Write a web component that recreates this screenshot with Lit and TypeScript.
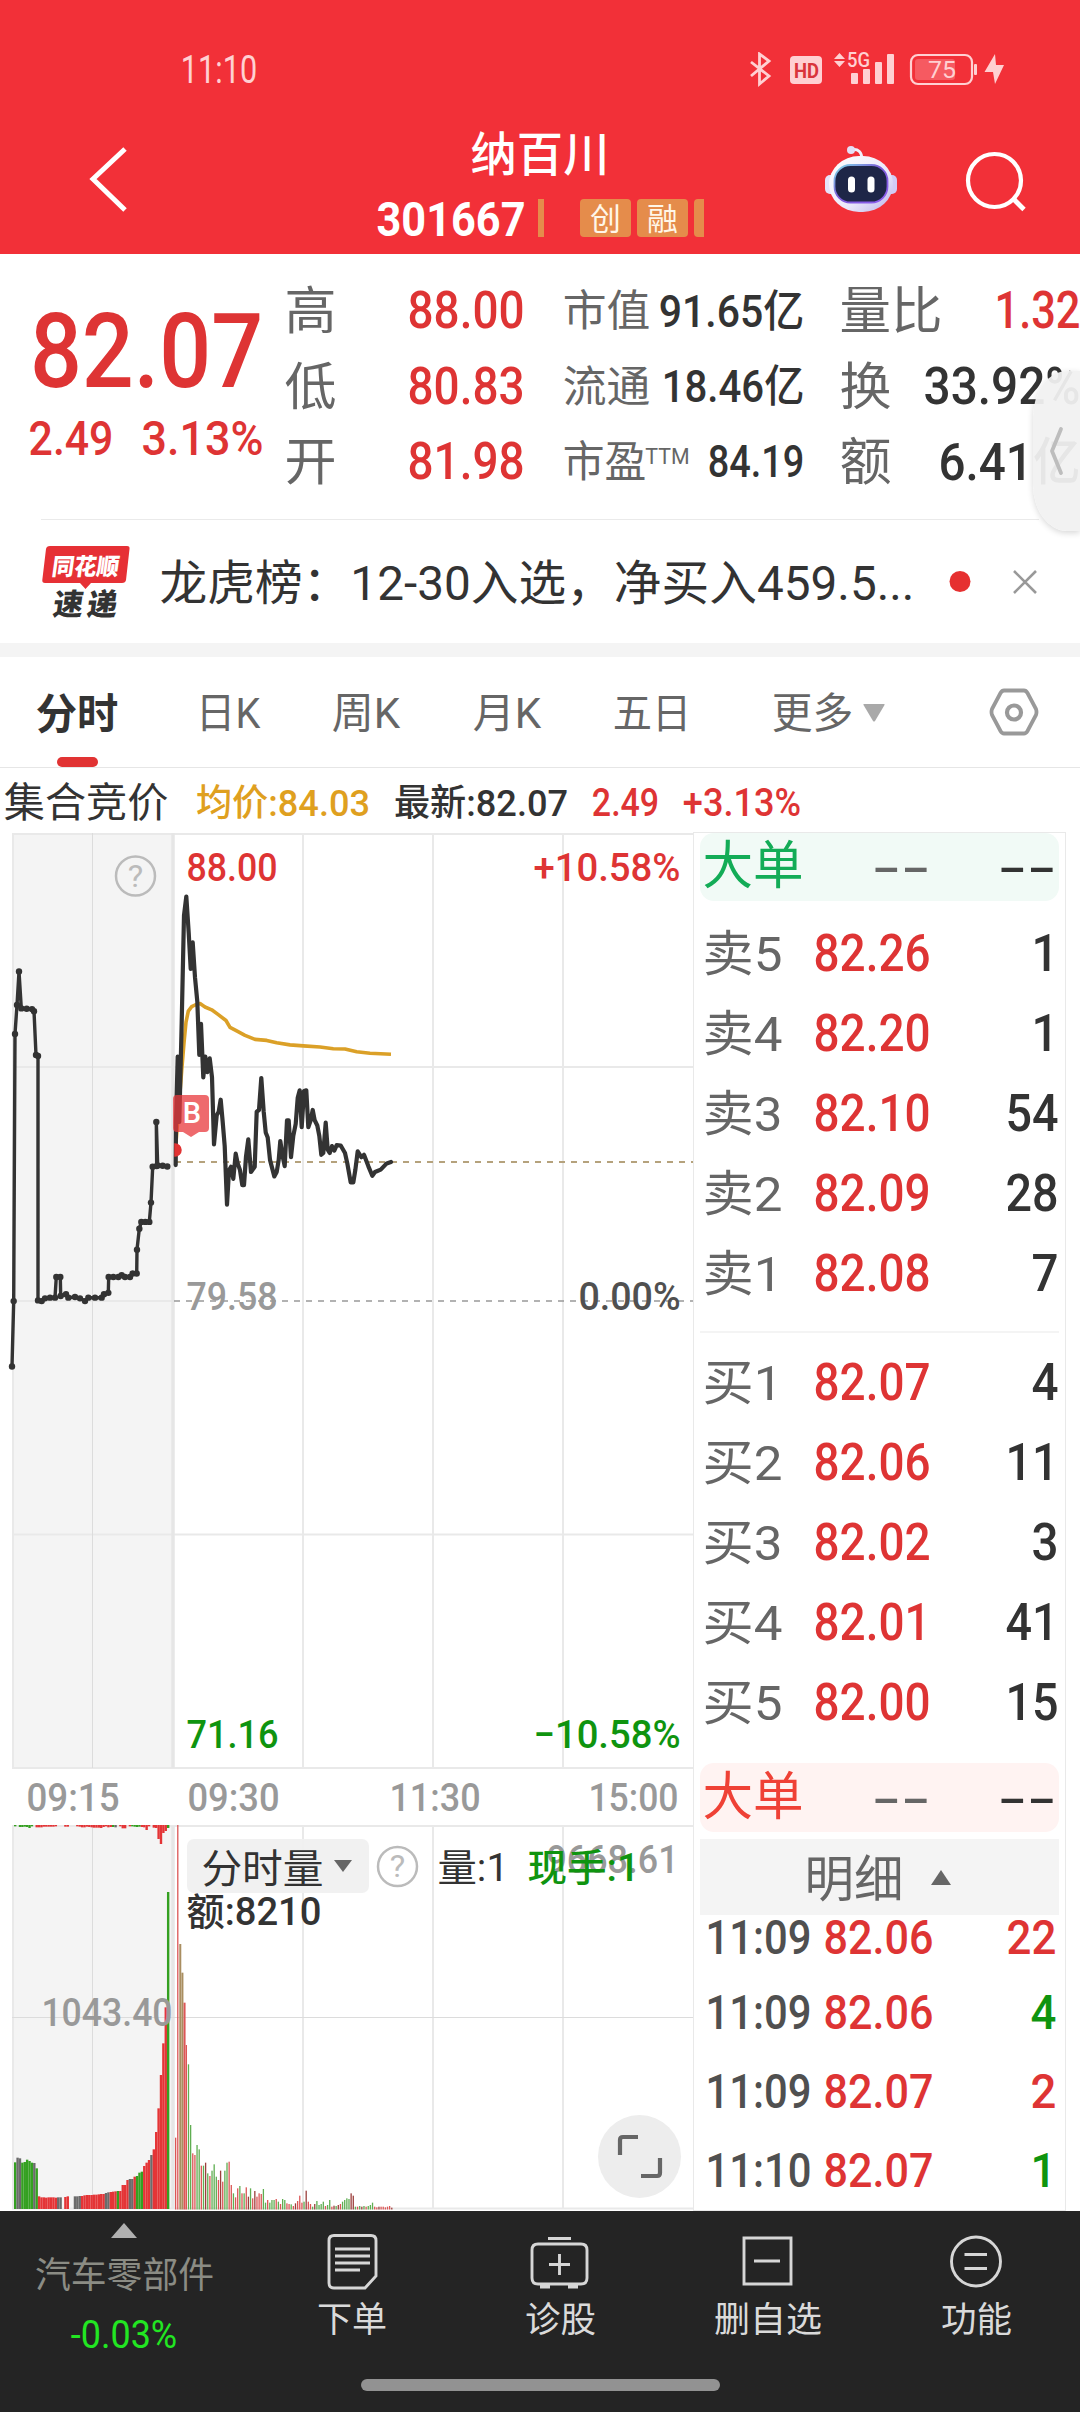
import { LitElement, html, svg, css } from "lit";
import { customElement } from "lit/decorators.js";

const CJK = /[\u4e00-\u9fff]/;

/** Text drawn centred in a box of its own size, fitted to a given ink width. */
const fit = (text: string, size: number, width: number, cls = "") => {
  const base = size / 2 + size * (CJK.test(text) ? 0.365 : 0.35);
  return html`<svg class="fit" width=${width} height=${size}>
    <text class=${cls} x=${-size * 0.03} y=${base} font-size=${size}
      textLength=${width + size * 0.06} lengthAdjust="spacingAndGlyphs">${text}</text>
  </svg>`;
};

/** Same for text placed on a chart: x is the ink's left edge, y its middle. */
const plot = (text: string, size: number, x: number, y: number, width: number, cls = "") => svg`
  <text class=${cls} x=${x - size * 0.04} y=${y + size * (CJK.test(text) ? 0.365 : 0.35)} font-size=${size}
    textLength=${width + size * 0.08} lengthAdjust="spacingAndGlyphs">${text}</text>`;

const shared = css`
  :host { display: block; }
  svg { display: block; flex: none; }
  .fit { overflow: visible; }
  text { font-family: Roboto, "Noto Sans CJK SC", sans-serif; fill: #333; }
  .m { font-weight: 500; }
  .b { font-weight: 700; }
  .red { fill: #de3434; }
  .green { fill: #0f940f; }
  .grey { fill: #666; }
  .pale { fill: #999; }
  .mid { fill: #505050; }
  .white { fill: #fff; }
  .dash { font-family: "DejaVu Sans", sans-serif; }
`;

@customElement("app-header")
class AppHeader extends LitElement {
  static styles = [shared, css`
    :host { background: #f23038; height: 254px; }
    .status { display: flex; justify-content: space-between; align-items: center; height: 118px; padding: 22px 74px 0 182px; box-sizing: border-box; }
    .soft { fill: #ffd0d2; }
    .nav { display: grid; grid-template-columns: 255px 1fr 255px; height: 136px; }
    .back { padding: 28px 0 0 88px; }
    .title { display: flex; flex-direction: column; align-items: center; padding-top: 12px; gap: 22px; }
    .code { display: flex; align-items: center; height: 38px; width: 328px; padding-left: 3px; }
    .bar { width: 6px; height: 38px; margin: 0 36px 0 14px; background: #e58c4b; }
    .chip { display: flex; justify-content: center; align-items: center; width: 51px; height: 38px; margin-right: 6px; border-radius: 4px; background: #e58c4b; }
    .chip.cut { width: 10px; margin: 0; border-radius: 4px 0 0 4px; }
    .cream { fill: #fff6e8; }
    .tools { display: flex; gap: 66px; padding-top: 26px; margin-left: -2px; }
  `];
  render() {
    return html`
      <div class="status">
        ${fit("11:10", 38, 74, "soft")}
        <svg width="258" height="36" viewBox="748 52 258 36">
          <g fill="none" stroke="#ffd0d2" stroke-width="2.8">
            <path d="M751 62 L769 76 L759.500 84 V54 L769 61 L751 76" />
            <rect x="911" y="55" width="61" height="29" rx="7" stroke-width="2.200" />
          </g>
          <g fill="#ffd0d2">
            <rect x="790" y="56" width="32" height="28" rx="4" />
            <path d="M839.500 53 L845 59 H834 Z M839.500 67 L845 61 H834 Z" />
            <rect x="851" y="73" width="7" height="11" rx="1" />
            <rect x="863" y="69" width="7" height="15" rx="1" />
            <rect x="875" y="62" width="7" height="22" rx="1" />
            <rect x="887" y="54" width="7" height="30" rx="1" />
            <rect x="974" y="64" width="3" height="11" rx="1" />
            <path d="M995 54 L984.500 72 H993 L995 84 L1004 65 H996 Z" />
          </g>
          <rect x="915" y="59" width="40" height="21" rx="3" fill="#f65a61" />
          <text class="b" x="794" y="77.500" font-size="21" textLength="25" lengthAdjust="spacingAndGlyphs" style="fill:#d9343b">HD</text>
          <text class="soft m" x="847" y="67" font-size="21" textLength="23" lengthAdjust="spacingAndGlyphs">5G</text>
          <text class="soft" x="928" y="78" font-size="24" textLength="28" lengthAdjust="spacingAndGlyphs">75</text>
        </svg>
      </div>
      <div class="nav">
        <div class="back">
          <svg width="44" height="68" viewBox="88 146 44 68"><path d="M125 149 L93 179 L125 210" fill="none" stroke="#fff" stroke-width="5" /></svg>
        </div>
        <div class="title">
          ${fit("纳百川", 47, 136, "m white")}
          <div class="code">
            ${fit("301667", 49, 146, "b white")}
            <span class="bar"></span>
            <span class="chip">${fit("创", 31, 29, "cream")}</span>
            <span class="chip">${fit("融", 31, 29, "cream")}</span>
            <span class="chip cut"></span>
          </div>
        </div>
        <div class="tools">
          <svg width="76" height="70" viewBox="823 144 76 70">
            <defs>
              <linearGradient id="shell" x1="0" y1="0" x2="1" y2="1"><stop offset="0" stop-color="#fff" /><stop offset=".6" stop-color="#ebe9fa" /><stop offset="1" stop-color="#b9b0ea" /></linearGradient>
              <linearGradient id="rim" x1="0" y1="0" x2="1" y2="1"><stop offset="0" stop-color="#7fe0ea" /><stop offset=".45" stop-color="#7b5bd6" /><stop offset="1" stop-color="#8d5cf0" /></linearGradient>
            </defs>
            <path d="M851 150 C858 148 862 152 862 160" fill="none" stroke="#f1effc" stroke-width="3" />
            <circle cx="851" cy="150" r="4" fill="#e3dff6" />
            <rect x="825" y="175" width="12" height="19" rx="5" fill="#e6e3fa" />
            <rect x="885" y="175" width="12" height="19" rx="5" fill="#d2cbf5" />
            <rect x="829" y="156" width="64" height="56" rx="30" fill="url(#shell)" />
            <rect x="834.500" y="165" width="53" height="37.500" rx="16" fill="#1e2647" stroke="url(#rim)" stroke-width="1.800" />
            <rect x="848" y="176.500" width="7" height="16" rx="3.500" fill="#fff" />
            <rect x="867.500" y="176.500" width="7" height="16" rx="3.500" fill="#fff" />
          </svg>
          <svg width="62" height="70" viewBox="965 144 62 70">
            <circle cx="994.500" cy="180.500" r="26.500" fill="none" stroke="#fff" stroke-width="4.200" />
            <path d="M1013 198.500 L1024 209.500" stroke="#fff" stroke-width="4.800" />
          </svg>
        </div>
      </div>`;
  }
}

@customElement("quote-panel")
class QuotePanel extends LitElement {
  static styles = [shared, css`
    :host { position: relative; }
    .grid { display: grid; grid-template-columns: 256px 278px 277px 239px; height: 246px; padding: 19px 0 0 30px; overflow: hidden; box-sizing: content-box; }
    .last { padding: 26px 0 0 3px; }
    .change { display: flex; gap: 31px; margin: 10px 0 0 -3px; }
    .row { display: flex; justify-content: space-between; align-items: center; height: 75.5px; }
    .c2 { width: 237px; } .c3 { width: 239px; } .c4 { width: 238px; }
    .sup { display: flex; } .sup svg + svg { margin: 5px 0 0 1px; }
    .rule { height: 1px; margin: 0 41px; background: #eaeaea; }
    .drawer { position: absolute; right: 0; top: 117px; width: 47px; height: 160px; border-radius: 34px 0 0 34px / 46px 0 0 46px; background: rgba(241, 241, 241, .94); box-shadow: 0 2px 6px rgba(0, 0, 0, .16); display: flex; align-items: center; }
    .drawer svg { margin-left: 14px; }
    .news { display: flex; align-items: center; height: 123px; padding-left: 38px; }
    .news .text { margin: 0 36px 0 27px; }
    .news .close { margin-left: 41px; }
    .brand { font-weight: 900; }
    .band { height: 14px; background: #f4f4f4; }
  `];
  render() {
    const r = (c: string, a: unknown, b: unknown) => html`<div class="row ${c}">${a}${b}</div>`;
    return html`
      <div class="grid">
        <div class="last">
          ${fit("82.07", 104, 227, "m red")}
          <div class="change">${fit("2.49", 49, 82, "m red")}${fit("3.13%", 49, 119, "m red")}</div>
        </div>
        <div>
          ${r("c2", fit("高", 51, 49, "grey"), fit("88.00", 51, 114, "m red"))}
          ${r("c2", fit("低", 51, 49, "grey"), fit("80.83", 51, 114, "m red"))}
          ${r("c2", fit("开", 51, 49, "grey"), fit("81.98", 51, 114, "m red"))}
        </div>
        <div>
          ${r("c3", fit("市值", 43, 85, "grey"), fit("91.65亿", 44, 143, "m"))}
          ${r("c3", fit("流通", 43, 85, "grey"), fit("18.46亿", 44, 140, "m"))}
          ${r("c3", html`<span class="sup">${fit("市盈", 43, 81, "grey")}${fit("TTM", 22, 43, "grey")}</span>`, fit("84.19", 44, 94, "m"))}
        </div>
        <div>
          ${r("c4", fit("量比", 51, 100, "grey"), fit("1.32", 51, 83, "m red"))}
          ${r("c4", fit("换", 51, 49, "grey"), fit("33.92%", 51, 154, "m"))}
          ${r("c4", fit("额", 51, 49, "grey"), fit("6.41亿", 51, 139, "m"))}
        </div>
      </div>
      <div class="rule"></div>
      <div class="drawer">
        <svg width="20" height="50" viewBox="0 0 20 50"><path d="M14 3 L5 25 L14 47" fill="none" stroke="#bdbdbd" stroke-width="3.800" stroke-linecap="round" stroke-linejoin="round" /></svg>
      </div>
      <div class="news">
        <svg width="96" height="76" viewBox="38 543 96 76">
          <path d="M50 545 H127 Q130 545 129.500 548 L126 579 Q125.500 582 122 582 H91 L85.500 588 L80 582 H45 Q42 582 42.300 579 L46 548 Q46.500 545 50 545 Z" fill="#e63035" />
          <text class="brand white" transform="translate(51 573.5) skewX(-8)" font-size="23.500" textLength="67" lengthAdjust="spacingAndGlyphs">同花顺</text>
          <text class="brand" transform="translate(52 613.5) skewX(-8)" font-size="30" textLength="64" lengthAdjust="spacing">速递</text>
        </svg>
        <span class="text">${fit("龙虎榜：12-30入选，净买入459.5...", 48, 752)}</span>
        <svg width="22" height="22"><circle cx="11" cy="10.500" r="10.500" fill="#e63030" /></svg>
        <svg class="close" width="26" height="26"><path d="M2 2 L24 24 M24 2 L2 24" stroke="#999" stroke-width="2.600" /></svg>
      </div>
      <div class="band"></div>`;
  }
}

@customElement("period-tabs")
class PeriodTabs extends LitElement {
  static styles = [shared, css`
    .tabs { display: grid; grid-template-columns: 160px 136px 141px 140px 159px 1fr auto; align-items: center; height: 110px; padding: 0 41px 0 37px; border-bottom: 1px solid #e6e6e6; }
    .tab { display: flex; align-items: center; height: 110px; padding-top: 2px; box-sizing: border-box; }
    .tab.on { flex-direction: column; align-items: flex-start; justify-content: flex-end; gap: 22px; }
    .tab.on::after { content: ""; width: 41px; height: 10px; margin-left: 20px; border-radius: 5px; background: #e13333; }
    .more { gap: 11px; }
    .info { display: flex; align-items: center; height: 65px; padding: 4px 0 0 5px; box-sizing: border-box; }
    .info svg { margin-right: 26px; }
    .info svg:first-child { margin-right: 30px; }
    .gold { fill: #dfa01f; }
  `];
  render() {
    return html`
      <div class="tabs">
        <div class="tab on">${fit("分时", 42, 80, "b")}</div>
        <div class="tab">${fit("日K", 42, 62, "grey")}</div>
        <div class="tab">${fit("周K", 42, 66, "grey")}</div>
        <div class="tab">${fit("月K", 42, 66, "grey")}</div>
        <div class="tab">${fit("五日", 41, 76, "grey")}</div>
        <div class="tab more">${fit("更多", 42, 79, "grey")}<svg width="22" height="18"><path d="M1 0 H21 Q22 0 21.500 1 L12 17 Q11 18 10 17 L.5 1 Q0 0 1 0" fill="#a9a9a9" /></svg></div>
        <svg width="50" height="48" viewBox="989 687 50 48">
          <path d="M1004 689.500 H1024 Q1026 689.500 1027.500 692 L1036 708 Q1037 711 1036 714 L1027.500 730 Q1026 732.500 1024 732.500 H1004 Q1002 732.500 1000.500 730 L992 714 Q991 711 992 708 L1000.500 692 Q1002 689.500 1004 689.500 Z" fill="none" stroke="#999" stroke-width="3.800" />
          <circle cx="1014" cy="711.500" r="7" fill="none" stroke="#999" stroke-width="4.200" />
        </svg>
      </div>
      <div class="info">
        ${fit("集合竞价", 41, 162)}
        ${fit("均价:84.03", 37, 172, "m gold")}
        ${fit("最新:82.07", 37, 172, "m")}
        ${fit("2.49", 38, 65, "m red")}
        ${fit("+3.13%", 38, 116, "m red")}
      </div>`;
  }
}

/* Price series in thirds of a pixel across and 1/2.904 px down from y = 850. */
const AUCTION = [36,1500,41,1310,45,534,51,450,57,353,64,460,80,461,96,462,102,468,108,595,114,598,114,1308,125,1310,135,1302,150,1300,165,1300,169,1240,181,1240,182,1295,198,1290,205,1300,225,1298,240,1302,255,1310,265,1300,285,1300,305,1300,312,1290,325,1286,326,1240,340,1240,355,1240,365,1235,375,1240,390,1240,398,1230,410,1230,411,1161,418,1100,424,1080,436,1080,448,1080,453,1024,458,920,470,918,469,790,473,916,488,917,502,919];
const PRICE = [527,915,528,790,533,600,538,790,545,500,552,190,559,135,566,240,572,345,578,268,585,370,592,440,598,595,603,505,610,660,616,600,622,645,629,605,636,660,642,855,650,770,656,760,662,725,668,790,674,860,681,1030,687,930,693,920,700,955,707,882,713,910,720,930,727,973,732,973,738,890,745,840,753,935,764,920,770,760,777,755,784,662,791,760,797,820,803,835,810,900,823,948,830,935,836,900,841,845,848,890,854,918,861,785,866,785,873,892,880,830,887,795,893,720,899,698,905,805,912,700,919,698,925,805,932,785,938,755,944,785,952,800,958,830,964,885,970,880,977,792,983,870,989,880,996,860,1003,873,1010,857,1022,858,1035,880,1042,910,1052,965,1060,965,1066,930,1073,875,1084,892,1092,885,1105,918,1117,946,1125,935,1142,928,1160,910,1173,906];
const AVERAGE = [528,850,538,730,545,640,552,560,558,500,565,468,575,455,585,450,600,446,615,456,635,464,655,478,678,495,690,515,710,525,735,538,765,550,800,553,830,560,870,566,910,569,960,572,1000,577,1035,578,1070,586,1110,590,1173,593];

const pairs = (s: number[]) => {
  const out: [number, number][] = [];
  for (let i = 0; i < s.length; i += 2) out.push([s[i] / 3, 850 + s[i + 1] / 2.904]);
  return out;
};
const line = (s: number[]) => pairs(s).map(([x, y]) => `${x.toFixed(1)},${y.toFixed(1)}`).join(" ");

/* Bar tops in thirds of a pixel below y = 1700, each with its colour letter. */
const PRE_BARS = "1387g 1373k 1375k 1388g 1386g 1379g 1383g 1388g 1389k 1405g 1489r 1492r 1492r 1493r 1492r 1492r 1492r 1493r 1492k 1492k - 1491r 1489r - - 1489k 1489k 1488k 1488r 1486r 1485r 1485r 1485r 1484r 1484r 1483r 1482r 1482r 1479k 1477k 1476r 1475r 1474r 1473g 1473r 1455r 1455r 1440r 1437k 1437k 1430r 1428g 1418g 1415g 1398r 1388r 1380r 1365k 1348r 1296r 1225r 1125r 1030r 922r 576g".split(" ");
const BARS = "1313r 375r 732m 818m 908r 1035r 1093g 1275g 1360r 1365r 1335g 1348g 1397r 1397g 1388d 1420g 1428r 1412g 1393g 1430g 1440r 1412d 1445r 1412g 1388g 1385r 1455r 1480g 1492r 1465r 1458g 1480r 1480g 1462r 1490d 1465g 1495r 1473d 1490r 1480r 1482r 1467g 1508g 1500r 1508g 1500g 1500g 1497r 1505g 1512r 1497g 1500g 1510r 1512r 1513g 1518r 1510d 1503r 1487r 1508r 1505g 1472d 1505r 1512r 1520g 1512d 1503g 1515g 1512g 1505g 1518r 1515g 1500g 1520r 1517d 1518g 1515d 1512r 1505g 1500g 1495g 1497g 1480d 1487d 1520g 1520r 1518g 1520d 1518g 1520r 1518g 1515g 1508g 1520r 1522r 1520d 1520r 1520r 1522r 1520r 1518r 1523d".split(" ");
const TOP_BARS = "4g 0g 6g 6g 5g 6g 9g 4g 0r 7r 7r 7r 5r 5r 5r 5r 5r 4r 0r 0r 0r 5r 5r 0r 0r 0r 4r 5r 7r 7r 5r 6r 7r 8r 8r 8r 9r 6r 4r 7r 6r 6g 7k 0r 4r 10r 10r 0r 4r 4g 5g 6g 5g 6r 7r 15r 4r 0r 8r 9r 42r 57r 24r 18r 9g".split(" ");
const TINT: Record<string, string> = { r: "#e43436", g: "#34a021", k: "#6b6b6b", d: "#7a2c2a", m: "#b08a5c" };
const SOFT: Record<string, string> = { r: "#dc5656", g: "#5fae52", d: "#9c3f3c", m: "#a98e60" };

@customElement("minute-chart")
class MinuteChart extends LitElement {
  static styles = [shared, css`
    .up { stroke: #333; stroke-width: 4.2; fill: none; stroke-linejoin: round; stroke-linecap: round; }
    .up.thin { stroke-width: 3.4; }
    .avg { stroke: #dba027; stroke-width: 3.6; fill: none; stroke-linejoin: round; }
    .g { stroke: #e9e9e9; stroke-width: 2; }
    .h { stroke: #dcdcdc; stroke-width: 1; }
    .help { fill: #bbb; }
  `];
  render() {
    return html`<svg width="693" height="1378" viewBox="0 833 693 1378">
      <rect x="12" y="834" width="161" height="934" fill="#f4f4f4" />
      <rect x="12" y="1826" width="161" height="383" fill="#f4f4f4" />
      <path class="g" d="M12 834 H693 M12 1067 H693 M12 1301 H174 M12 1534.500 H693 M12 1768 H693 M12 1826 H693 M12 2208.500 H693 M13 833 V1768 M13 1826 V2209 M303 833 V1768 M303 1826 V2209 M433 833 V1768 M433 1826 V2209 M563 833 V1768 M563 1826 V2209" />
      <path d="M173 833 V1768 M173 1826 V2209" stroke="#e6e6e6" stroke-width="3.500" />
      <path class="h" d="M92.500 833 V1768 M92.500 1826 V2209 M12 2017.500 H693" />
      <path d="M174 1301 H693" stroke="#999" stroke-width="1.500" stroke-dasharray="6 6" />
      <path d="M175 1162 H693" stroke="#b5a27c" stroke-width="2" stroke-dasharray="6 6" />
      <polyline class="avg" points=${line(AVERAGE)} />
      <polyline class="up thin" points=${line(AUCTION)} />
      ${pairs(AUCTION).map(([x, y]) => svg`<circle cx=${x} cy=${y} r="3.2" fill="#333" />`)}
      <polyline class="up" points=${line(PRICE)} />
      <path d="M177 1095 H205 Q209 1095 209 1099 V1128 Q209 1132 205 1132 H199 L191 1137 L183 1132 H177 Q173 1132 173 1128 V1099 Q173 1095 177 1095" fill="#e8383c" fill-opacity=".75" />
      <path d="M175 1144 A6 6 0 0 1 175 1156 Z" fill="#e13333" stroke="#e13333" stroke-width="1.500" />
      ${plot("B", 29, 184, 1113, 16, "m white")}
      <circle cx="135.500" cy="876" r="19.500" fill="none" stroke="#bbb" stroke-width="2.500" />
      ${plot("?", 31, 129, 876, 13, "help")}

      ${plot("88.00", 39.5, 188, 867.5, 88, "m red")}
      ${plot("+10.58%", 39.5, 535, 867.5, 144, "m red")}
      ${plot("79.58", 39.5, 188, 1296.500, 88, "m pale")}
      ${plot("0.00%", 39.5, 580, 1296.500, 99, "m mid")}
      ${plot("71.16", 39.5, 188, 1734.5, 89, "m green")}
      ${plot("−10.58%", 39.5, 535, 1734.5, 144, "m green")}
      ${plot("09:15", 39.5, 28, 1797.500, 90, "m pale")}
      ${plot("09:30", 39.5, 189, 1797.500, 89, "m pale")}
      ${plot("11:30", 39.5, 391, 1797.500, 88, "m pale")}
      ${plot("15:00", 39.5, 590, 1797.500, 87, "m pale")}

      ${PRE_BARS.map((b, i) => b === "-" ? "" : svg`<rect x=${14 + i * 2.39} y=${1700 + parseInt(b) / 3} width="2.400" height=${509 - parseInt(b) / 3} fill=${TINT[b.slice(-1)]} />`)}
      ${TOP_BARS.map((b, i) => svg`<rect x=${14 + i * 2.39} y="1825" width="2.400" height=${parseInt(b) / 3} fill=${TINT[b.slice(-1)]} />`)}
      ${BARS.map((b, i) => svg`<rect x=${175 + i * 2.14} y=${1700 + parseInt(b) / 3} width=${i > 1 && i < 5 ? 2 : 1.3} height=${509.5 - parseInt(b) / 3} fill=${SOFT[b.slice(-1)]} />`)}

      ${plot("1043.40", 39.5, 43, 2012, 128, "m pale")}
      <rect x="187" y="1839" width="182" height="54" rx="7" fill="#f0f0f0" fill-opacity=".93" />
      ${plot("分时量", 40, 203, 1868.5, 119)}
      <path d="M334 1860 H352 L343 1872 Z" fill="#666" />
      <circle cx="397.500" cy="1866.500" r="19.500" fill="none" stroke="#bbb" stroke-width="2.500" />
      ${plot("?", 31, 391, 1866.500, 13, "help")}
      ${plot("额:8210", 38, 188, 1911.5, 132, "m")}
      ${plot("量:1", 38, 439, 1867, 68)}
      ${plot("9668.61", 39.5, 548, 1859.5, 129, "m pale")}
      ${plot("现手:1", 38, 529, 1867, 109, "m green")}
      <circle cx="639.500" cy="2156.500" r="41.500" fill="#ededed" />
      <path d="M620 2155 V2140 Q620 2137 623 2137 H638 M660 2158 V2173 Q660 2176 657 2176 H641" fill="none" stroke="#666" stroke-width="4.200" />
    </svg>`;
  }
}

@customElement("order-book")
class OrderBook extends LitElement {
  static styles = [shared, css`
    :host { width: 373px; height: 1377px; box-sizing: border-box; border: 1px solid #e9e9e9; padding: 0 6px 0 6px; overflow: hidden; }
    .big { display: flex; align-items: center; height: 68px; border-radius: 14px; padding: 0 4px 5px 4px; background: #f1faf6; box-sizing: border-box; }
    .big.sell { background: #fff3f2; height: 69px; margin-top: 21px; padding-bottom: 3px; }
    .big svg:nth-child(2) { margin-left: 71px; }
    .big svg:nth-child(3) { margin-left: auto; }
    .big svg + svg { margin-top: 2px; }
    .jade { fill: #13ac57; }
    .coral { fill: #ef4136; }
    .asks { padding-top: 12px; }
    .rule { height: 2px; margin: 18px 0 9px; background: #f4f4f4; }
    .row { display: grid; grid-template-columns: 111px 1fr auto; align-items: center; height: 80px; padding: 0 2px 0 4px; }
    .head { display: flex; justify-content: center; align-items: center; gap: 29px; height: 76px; margin-top: 7px; padding: 3px 3px 0 0; background: #f4f4f4; box-sizing: border-box; }
    .head svg:last-child { margin-top: -3px; }
    .tick { display: grid; grid-template-columns: 118px 1fr auto; align-items: center; height: 79px; padding: 0 4px 0 7px; }
    .tick:first-child { height: 71px; margin-top: -14px; }
    .ticks { display: flow-root; padding-bottom: 1px; }
  `];
  render() {
    const level = (n: string, p: string, q: string) => html`<div class="row">
      ${fit(n, 49, 77, "grey")}${fit(p, 51, 114, "m red")}${fit(q, 51, q.length > 1 ? 50 : 24, "m")}</div>`;
    const tick = (t: string, p: string, q: string, c: string) => html`<div class="tick">
      ${fit(t, 48, 103, "mid m")}${fit(p, 48, 107, "m red")}${fit(q, 48, q.length > 1 ? 47 : 23, "m " + c)}</div>`;
    return html`
      <div class="big">${fit("大单", 52, 98, "jade")}${fit("--", 54, 56, "dash grey")}${fit("--", 54, 56, "dash")}</div>
      <div class="asks">
        ${level("卖5", "82.26", "1")}${level("卖4", "82.20", "1")}${level("卖3", "82.10", "54")}${level("卖2", "82.09", "28")}${level("卖1", "82.08", "7")}
      </div>
      <div class="rule"></div>
      <div>
        ${level("买1", "82.07", "4")}${level("买2", "82.06", "11")}${level("买3", "82.02", "3")}${level("买4", "82.01", "41")}${level("买5", "82.00", "15")}
      </div>
      <div class="big sell">${fit("大单", 52, 98, "coral")}${fit("--", 54, 56, "dash grey")}${fit("--", 54, 56, "dash")}</div>
      <div class="head">${fit("明细", 50, 96, "grey")}<svg width="20" height="15"><path d="M10 0 L20 15 H0 Z" fill="#666" /></svg></div>
      <div class="ticks">
        ${tick("11:09", "82.06", "22", "red")}${tick("11:09", "82.06", "4", "green")}${tick("11:09", "82.07", "2", "red")}${tick("11:10", "82.07", "1", "green")}
      </div>`;
  }
}

@customElement("bottom-bar")
class BottomBar extends LitElement {
  static styles = [shared, css`
    :host { height: 201px; background: #242424; }
    .items { display: grid; grid-template-columns: 248px 208px 208px 208px 208px; height: 168px; }
    .item { display: flex; flex-direction: column; align-items: center; gap: 11px; padding-top: 20px; }
    .sector { display: flex; flex-direction: column; align-items: center; padding-top: 12px; gap: 19px; }
    .sector svg:last-child { margin-top: 4px; }
    .dim { fill: #8b8c84; }
    .lime { fill: #22e622; }
    .light { fill: #dadada; }
    .i { fill: none; stroke: #d6d6d6; stroke-width: 2.9; }
    .home { width: 359px; height: 12px; margin: 0 auto; border-radius: 6px; background: #929292; }
  `];
  render() {
    return html`
      <div class="items">
        <div class="sector">
          <svg width="26" height="15"><path d="M13 0 L26 15 H0 Z" fill="#b0b0b0" /></svg>
          ${fit("汽车零部件", 36, 177, "dim")}
          ${fit("-0.03%", 38, 104, "lime")}
        </div>
        <div class="item">
          <svg width="60" height="60" viewBox="322 2231 60 60"><path class="i" d="M334 2235.500 H371 Q376 2235.500 376 2240.500 V2276 L365 2288 H334 Q329 2288 329 2283 V2240.500 Q329 2235.500 334 2235.500 Z M335 2249 H370 M335 2256 H370 M335 2263 H370 M335 2270 H360" /></svg>
          ${fit("下单", 35, 68, "light")}
        </div>
        <div class="item">
          <svg width="60" height="60" viewBox="530 2231 60 60"><path class="i" d="M538 2244 H581 Q587 2244 587 2250 V2278 Q587 2284 581 2284 H538 Q532 2284 532 2278 V2250 Q532 2244 538 2244 Z M548 2238.500 H571 M559.500 2254 V2275 M549 2264.500 H570 M540 2287 H550 M568 2287 H578" /></svg>
          ${fit("诊股", 35, 69, "light")}
        </div>
        <div class="item">
          <svg width="60" height="60" viewBox="738 2231 60 60"><path class="i" d="M744 2238 H791 V2284 H744 Z M754 2261 H780" /></svg>
          ${fit("删自选", 35, 106, "light")}
        </div>
        <div class="item">
          <svg width="60" height="60" viewBox="946 2231 60 60"><circle class="i" cx="976" cy="2261.500" r="24.500" /><path class="i" d="M964.500 2254.500 H987 M964.500 2268.500 H987" /></svg>
          ${fit("功能", 35, 69, "light")}
        </div>
      </div>
      <div class="home"></div>`;
  }
}

@customElement("app-root")
class AppRoot extends LitElement {
  static styles = css`
    :host { display: block; width: 1080px; height: 2412px; overflow: hidden; background: #fff; }
    .body { display: flex; height: 1378px; }
    minute-chart { flex: none; width: 693px; }
    order-book { margin-top: -1px; height: 1379px; }
  `;
  render() {
    return html`
      <app-header></app-header>
      <quote-panel></quote-panel>
      <period-tabs></period-tabs>
      <div class="body"><minute-chart></minute-chart><order-book></order-book></div>
      <bottom-bar></bottom-bar>`;
  }
}
